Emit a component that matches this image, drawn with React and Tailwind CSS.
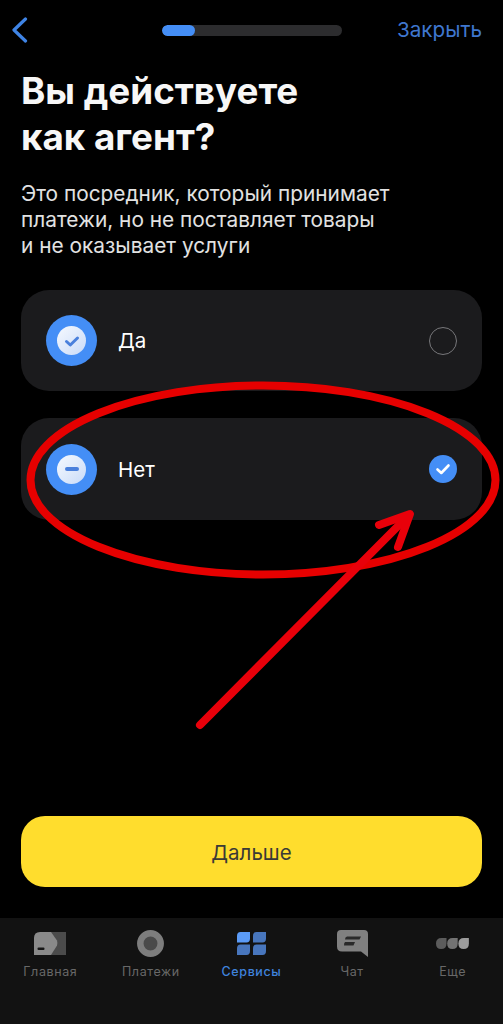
import React from "react";

function Badge({ children }) {
  return (
    <div className="flex h-[51px] w-[51px] shrink-0 items-center justify-center rounded-full bg-[#448ef6]">
      <div className="flex h-[29px] w-[29px] items-center justify-center rounded-full bg-gradient-to-br from-[#f6f9fe] to-[#c9dbf8]">
        {children}
      </div>
    </div>
  );
}

function Option({ label, selected, icon, tall }) {
  return (
    <div className={`flex items-center rounded-[28px] bg-[#1b1b1d] pl-[25px] pr-[25px] ${tall ? "h-[102px]" : "h-[101px]"}`}>
      <Badge>{icon}</Badge>
      <span className="ml-[21px] flex-1 pt-[2px] text-[20.5px] leading-none text-white">{label}</span>
      {selected ? (
        <div className="flex h-[28px] w-[28px] items-center justify-center rounded-full bg-[#448ef6]">
          <svg width="18" height="18" viewBox="0 0 18 18" fill="none">
            <path d="M3.5 9.5 7.3 13 14.5 5.5" stroke="#fff" strokeWidth="2.6" strokeLinecap="round" strokeLinejoin="round" />
          </svg>
        </div>
      ) : (
        <div className="h-[28px] w-[28px] rounded-full border border-[#77777a]" />
      )}
    </div>
  );
}

function HomeIcon() {
  return (
    <svg width="32" height="23" viewBox="0 0 32 23">
      <path d="M15 0H32V23H15Z" fill="#4b4b4b" />
      <path d="M6 0H17L23 8.5Q23.8 11 23 13.5L17 23H0V6Q0 0 6 0Z" fill="#8a8a8a" />
      <rect x="3.5" y="15.5" width="7" height="2.5" rx="1" fill="#161616" />
    </svg>
  );
}

function PayIcon() {
  return (
    <svg width="27" height="27" viewBox="0 0 27 27">
      <circle cx="13.5" cy="13.5" r="10.2" fill="#4a4a4a" stroke="#7d7d7d" strokeWidth="6.5" />
    </svg>
  );
}

function ServicesIcon() {
  const leaf = "M3.5 0H13V6.5Q13 10.5 9.5 10.5H0V4Q0 0 3.5 0Z";
  return (
    <svg width="29" height="23" viewBox="0 0 29 23">
      <path d={leaf} fill="#5b9bf7" />
      <path d={leaf} transform="translate(16 0)" fill="#4876bd" />
      <path d={leaf} transform="translate(0 12.5)" fill="#4876bd" />
      <path d={leaf} transform="translate(16 12.5)" fill="#4876bd" />
    </svg>
  );
}

function ChatIcon() {
  return (
    <svg width="31" height="27" viewBox="0 0 31 27">
      <path d="M4 0H27Q31 0 31 4V27L24 21.5H5Q0 21.5 0 16.5V4Q0 0 4 0Z" fill="#808080" />
      <path d="M10 6.5H24L22.5 9.5H8Q8 7 10 6.5Z" fill="#2a2a2a" />
      <path d="M8 12H18L16.5 15.5H7Q6.8 13 8 12Z" fill="#2a2a2a" />
    </svg>
  );
}

function MoreIcon() {
  const blob = "M5.5 0H10.5V5.5Q10.5 11 5.2 11 0 11 0 5.5 0 0 5.5 0Z";
  return (
    <svg width="33" height="11" viewBox="0 0 33 11">
      <path d={blob} fill="#5c5c5c" />
      <path d={blob} transform="translate(11.2 0)" fill="#737373" />
      <path d={blob} transform="translate(22.4 0)" fill="#9c9c9c" />
    </svg>
  );
}

function Tab({ icon, label, active }) {
  return (
    <div className="flex flex-col items-center">
      <div className="flex h-[27px] items-center">{icon}</div>
      <span className={`mt-[7px] text-[12.5px] leading-[16px] tracking-[0.6px] ${active ? "font-medium text-[#3f82dc]" : "text-[#686868]"}`}>
        {label}
      </span>
    </div>
  );
}

export default function App() {
  return (
    <div
      className="relative flex h-[1024px] w-[503px] flex-col overflow-hidden bg-black"
      style={{ fontFamily: '"Inter", "Liberation Sans", sans-serif' }}
    >
      <header className="grid h-[60px] shrink-0 grid-cols-[1fr_180px_1fr] items-center px-[21px]">
        <svg className="-ml-[10px]" width="17" height="26" viewBox="0 0 17 26" fill="none">
          <path d="M14.5 2 3 13l11.5 11" stroke="#3f84e5" strokeWidth="3.2" strokeLinecap="round" strokeLinejoin="round" />
        </svg>
        <div className="h-[11px] w-[180px] overflow-hidden rounded-full bg-[#2c2c2e]">
          <div className="h-full w-[33px] rounded-full bg-[#448ef6]" />
        </div>
        <span className="justify-self-end whitespace-nowrap text-[20.7px] leading-none text-[#3f77cf]">Закрыть</span>
      </header>

      <main className="flex flex-1 flex-col px-[21px]">
        <h1 className="mt-[8px] text-[36.8px] font-bold leading-[46px] text-[#f7f7f7]">
          Вы действуете
          <br />
          как агент?
        </h1>
        <p className="mt-[21px] text-[20.85px] leading-[26px] text-[#e2e2e2]">
          Это посредник, который принимает
          <br />
          платежи, но не поставляет товары
          <br />
          и не оказывает услуги
        </p>
        <div className="mt-[31px] flex flex-col gap-[27px]">
          <Option
            label="Да"
            icon={
              <svg width="18" height="18" viewBox="0 0 18 18" fill="none">
                <path d="M3.5 9.5 7.3 13 14.5 6" stroke="#4a80dc" strokeWidth="3" strokeLinecap="round" strokeLinejoin="round" />
              </svg>
            }
          />
          <Option
            label="Нет"
            selected
            tall
            icon={<div className="h-[3.5px] w-[14px] rounded-full bg-[#4a80dc]" />}
          />
        </div>
        <button className="mb-[31px] mt-auto flex h-[71px] items-center justify-center rounded-[24px] bg-[#ffdd2d] pt-[3px] text-[20.5px] text-[#3a3a36]">
          Дальше
        </button>
      </main>

      <nav className="grid h-[106px] shrink-0 grid-cols-5 bg-[#121212] pt-[12px]">
        <Tab icon={<HomeIcon />} label="Главная" />
        <Tab icon={<PayIcon />} label="Платежи" />
        <Tab icon={<ServicesIcon />} label="Сервисы" active />
        <Tab icon={<ChatIcon />} label="Чат" />
        <Tab icon={<MoreIcon />} label="Еще" />
      </nav>

      <svg className="pointer-events-none absolute left-0 top-0" width="503" height="1024" fill="none">
        <ellipse cx="263" cy="480" rx="232.5" ry="94.5" stroke="#e60000" strokeWidth="8" />
        <path d="M200 725 408 516" stroke="#e8000a" strokeWidth="8" strokeLinecap="round" />
        <path d="M379 525 410 514 398 547" stroke="#e8000a" strokeWidth="8" strokeLinecap="round" strokeLinejoin="round" />
      </svg>
    </div>
  );
}
